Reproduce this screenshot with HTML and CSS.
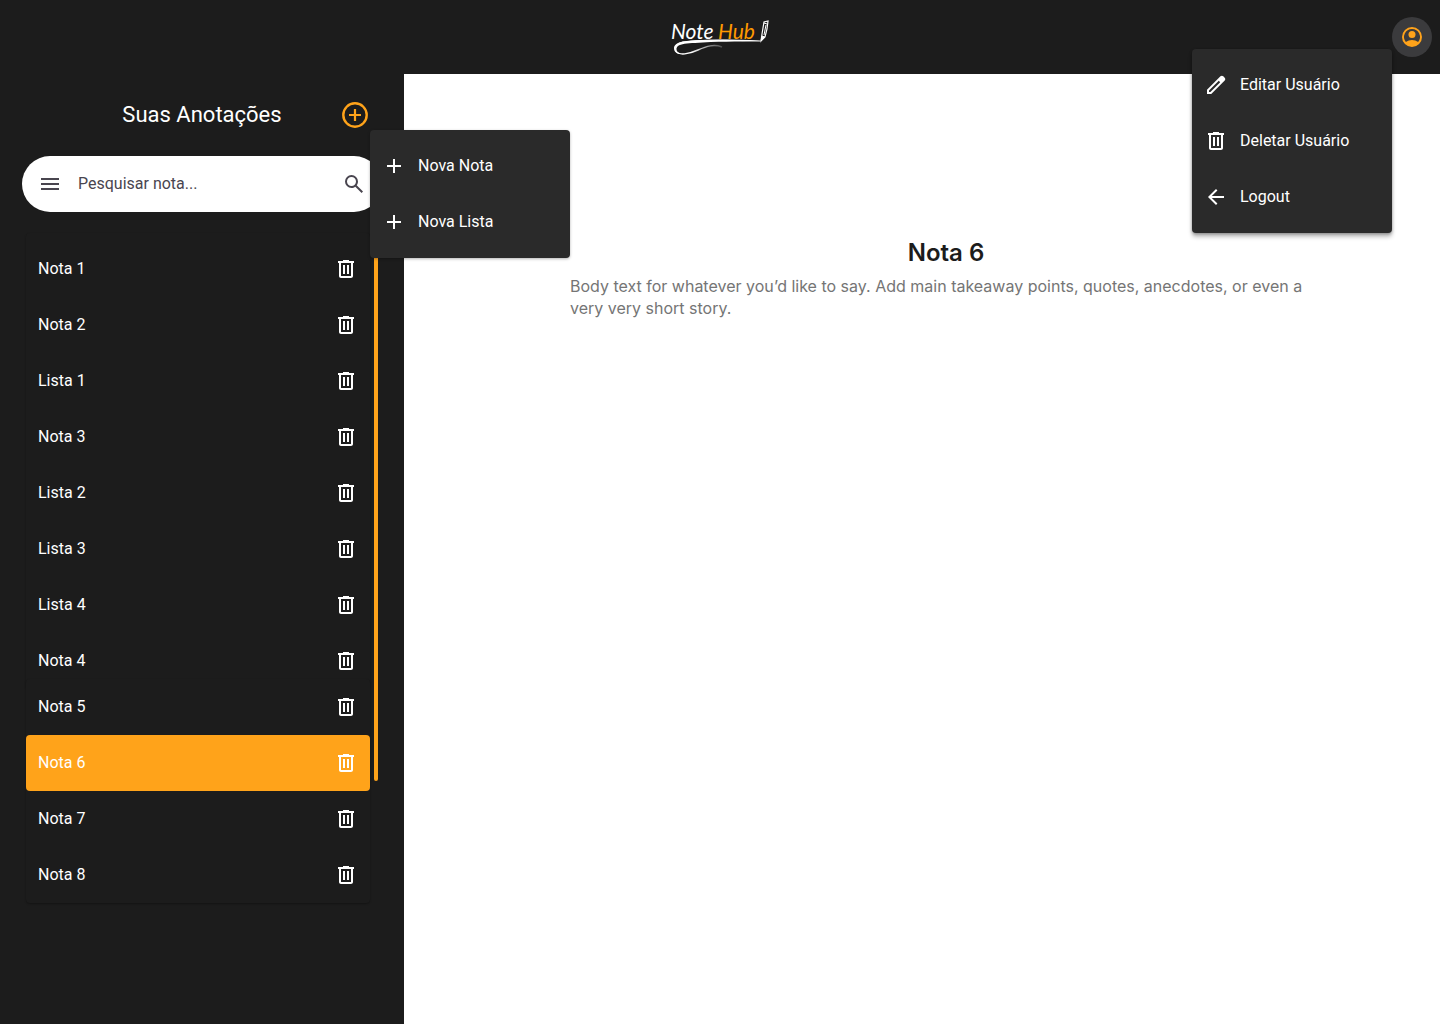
FILE: index.html
```html
<!DOCTYPE html>
<html lang="pt-BR">
<head>
<meta charset="utf-8">
<meta name="viewport" content="width=device-width, initial-scale=1">
<title>NoteHub</title>
<link rel="stylesheet" href="styles.css">
</head>
<body>
<svg class="sprite" aria-hidden="true">
  <symbol id="trash" viewBox="0 0 24 24"><path d="M7 21C5.9 21 5 20.1 5 19V6H4V4H9V3H15V4H20V6H19V19C19 20.1 18.1 21 17 21H7ZM17 6H7V19H17V6ZM9 17H11V8H9V17ZM13 17H15V8H13V17Z"/></symbol>
  <symbol id="plus" viewBox="0 0 24 24"><path d="M19 13H13V19H11V13H5V11H11V5H13V11H19V13Z"/></symbol>
</svg>

<header class="topbar">
  <a class="logo" href="#" aria-label="NoteHub">
    <svg width="98" height="38" viewBox="0 0 98 38">
      <defs>
        <linearGradient id="swoosh" gradientUnits="userSpaceOnUse" x1="20" y1="0" x2="51" y2="0">
          <stop offset="0" stop-color="#fff"/><stop offset="1" stop-color="#fff" stop-opacity="0.2"/>
        </linearGradient>
      </defs>
      <text class="logo-text" x="0" y="20">Note<tspan class="logo-accent" x="47">Hub</tspan></text>
      <path d="M89 22C62 21 28 21 12 23C6 24 3 28 5 32" fill="none" stroke="#fff" stroke-width="1.200"/>
      <path d="M89 22C62 21 40 20 18 22C9 22 3 25 3 29C3 33 6 35 10 35C5 33 4 30 7 27C10 25 16 24 24 24C45 22 65 23 89 22Z" fill="#fff"/>
      <path d="M5 32C8 37 18 35 27 31C36 27 43 25 51 28" fill="none" stroke="url(#swoosh)" stroke-width="1.400"/>
      <path d="M90 22L91 15L93 3L97 2L96 10L94 18Z" fill="#1c1c1c" stroke="#fff" stroke-width="1.200"/>
      <path d="M93 4L96 5M95 6L93 16M90 22L91 17L94 18Z" fill="#fff" stroke="#fff"/>
    </svg>
  </a>
  <div class="account">
    <button class="avatar" aria-label="Conta" aria-expanded="true">
      <svg class="icon" viewBox="0 0 24 24"><path fill-rule="evenodd" d="M12 2A10 10 0 1 0 12 22A10 10 0 1 0 12 2ZM12 4A8 8 0 0 1 18.1 17.1C16.4 15.8 14.3 15 12 15S7.600 15.800 5.900 17.100A8 8 0 0 1 12 4Z"/><circle cx="12" cy="9.500" r="3.500"/></svg>
    </button>
    <div class="menu account-menu">
      <button class="menu-item"><svg class="icon" viewBox="0 0 24 24"><path fill-rule="evenodd" d="M5 19H6.400L16.200 9.200L14.800 7.800L5 17.600V19ZM3 21V16.750L16.450 3.325C16.830 2.940 17.300 2.750 17.860 2.750C18.425 2.750 18.900 2.940 19.275 3.325L20.675 4.725C21.060 5.100 21.260 5.567 21.275 6.100C21.290 6.650 21.110 7.117 20.725 7.500L7.250 21Z"/></svg>Editar Usuário</button>
      <button class="menu-item"><svg class="icon"><use href="#trash"/></svg>Deletar Usuário</button>
      <button class="menu-item"><svg class="icon" viewBox="0 0 24 24"><path d="M7.825 13L13.425 18.600L12 20L4 12L12 4L13.425 5.400L7.825 11H20V13H7.825Z"/></svg>Logout</button>
    </div>
  </div>
</header>

<div class="workspace">
  <aside class="sidebar">
    <div class="sidebar-head">
      <h2 class="sidebar-title">Suas Anotações</h2>
      <button class="add" aria-label="Adicionar" aria-expanded="true">
        <svg class="add-icon" viewBox="0 0 30 30" fill="none" stroke="currentColor"><circle cx="15" cy="15" r="11.700" stroke-width="2.400"/><path d="M15 9V21M9 15H21" stroke-width="2.200"/></svg>
      </button>
    </div>
    <form class="search">
      <svg class="icon" viewBox="0 0 24 24" aria-hidden="true"><path d="M3 6H21V8H3ZM3 11H21V13H3ZM3 16H21V18H3Z"/></svg>
      <input class="search-input" type="text" placeholder="Pesquisar nota..." aria-label="Pesquisar nota">
      <button class="search-button" aria-label="Pesquisar"><svg class="icon" viewBox="0 0 24 24"><path d="M19.600 21L13.300 14.700C12.300 15.500 11 16 9.500 16A6.500 6.500 0 1 1 16 9.500C16 11 15.500 12.300 14.700 13.300L21 19.600L19.600 21ZM9.500 14A4.500 4.500 0 1 0 9.500 5A4.500 4.500 0 0 0 9.500 14Z"/></svg></button>
    </form>
    <div class="notes">
      <div class="note-groups">
        <ul class="note-list note-list-first">
          <li class="note"><a class="note-link" href="#">Nota 1</a><button class="delete" aria-label="Deletar Nota 1"><svg class="icon"><use href="#trash"/></svg></button></li>
          <li class="note"><a class="note-link" href="#">Nota 2</a><button class="delete" aria-label="Deletar Nota 2"><svg class="icon"><use href="#trash"/></svg></button></li>
          <li class="note"><a class="note-link" href="#">Lista 1</a><button class="delete" aria-label="Deletar Lista 1"><svg class="icon"><use href="#trash"/></svg></button></li>
          <li class="note"><a class="note-link" href="#">Nota 3</a><button class="delete" aria-label="Deletar Nota 3"><svg class="icon"><use href="#trash"/></svg></button></li>
          <li class="note"><a class="note-link" href="#">Lista 2</a><button class="delete" aria-label="Deletar Lista 2"><svg class="icon"><use href="#trash"/></svg></button></li>
          <li class="note"><a class="note-link" href="#">Lista 3</a><button class="delete" aria-label="Deletar Lista 3"><svg class="icon"><use href="#trash"/></svg></button></li>
          <li class="note"><a class="note-link" href="#">Lista 4</a><button class="delete" aria-label="Deletar Lista 4"><svg class="icon"><use href="#trash"/></svg></button></li>
          <li class="note"><a class="note-link" href="#">Nota 4</a><button class="delete" aria-label="Deletar Nota 4"><svg class="icon"><use href="#trash"/></svg></button></li>
        </ul>
        <ul class="note-list note-list-second">
          <li class="note"><a class="note-link" href="#">Nota 5</a><button class="delete" aria-label="Deletar Nota 5"><svg class="icon"><use href="#trash"/></svg></button></li>
          <li class="note note-active"><a class="note-link" href="#" aria-current="page">Nota 6</a><button class="delete" aria-label="Deletar Nota 6"><svg class="icon"><use href="#trash"/></svg></button></li>
          <li class="note"><a class="note-link" href="#">Nota 7</a><button class="delete" aria-label="Deletar Nota 7"><svg class="icon"><use href="#trash"/></svg></button></li>
          <li class="note"><a class="note-link" href="#">Nota 8</a><button class="delete" aria-label="Deletar Nota 8"><svg class="icon"><use href="#trash"/></svg></button></li>
        </ul>
      </div>
      <div class="scroll-thumb"></div>
    </div>
    <div class="menu add-menu">
      <button class="menu-item"><svg class="icon"><use href="#plus"/></svg>Nova Nota</button>
      <button class="menu-item"><svg class="icon"><use href="#plus"/></svg>Nova Lista</button>
    </div>
  </aside>

  <main class="content">
    <h1 class="note-title">Nota 6</h1>
    <p class="note-body">Body text for whatever you’d like to say. Add main takeaway points, quotes, anecdotes, or even a very very short story.</p>
  </main>
</div>
</body>
</html>
```
FILE: styles.css
```css
:root {
  --dark: #1c1c1c;
  --menu: #2a2a2a;
  --orange: #ffa31a;
}

* {
  box-sizing: border-box;
}

body {
  margin: 0;
  min-height: 100vh;
  display: flex;
  flex-direction: column;
  background: #fff;
  font: 16px/24px Roboto, "Liberation Sans", sans-serif;
}

h1, h2, p, ul {
  margin: 0;
  padding: 0;
}

button {
  padding: 0;
  border: 0;
  background: none;
  color: inherit;
  font: inherit;
  cursor: pointer;
}

.sprite {
  display: none;
}

.icon {
  display: block;
  flex: none;
  width: 24px;
  height: 24px;
  fill: currentColor;
}

/* Top bar */
.topbar {
  display: grid;
  grid-template-columns: 1fr auto 1fr;
  align-items: center;
  height: 74px;
  padding: 0 8px;
  background: var(--dark);
}

.logo {
  grid-column: 2;
  height: 36px;
}

.logo svg {
  display: block;
  overflow: visible;
}

.logo-text {
  fill: #fff;
  font: italic 21px Lato, sans-serif;
}

.logo-accent {
  fill: #ff9900;
}

.account {
  position: relative;
  justify-self: end;
}

.avatar {
  display: grid;
  place-items: center;
  width: 40px;
  height: 40px;
  border-radius: 50%;
  background: #3b3b3d;
  color: var(--orange);
}

/* Pop-up menus */
.menu {
  position: absolute;
  z-index: 2;
  width: 200px;
  padding: 8px 0;
  border-radius: 4px;
  background: var(--menu);
  box-shadow: 0 1px 3px rgba(0, 0, 0, 0.3);
  color: #fff;
}

.account-menu {
  top: 32px;
  right: 40px;
  box-shadow: 0 4px 4px rgba(0, 0, 0, 0.25), 0 1px 3px rgba(0, 0, 0, 0.3);
}

.add-menu {
  top: 56px;
  left: 370px;
}

.menu-item {
  display: flex;
  align-items: center;
  gap: 12px;
  width: 100%;
  height: 56px;
  padding: 0 12px;
}

/* Sidebar */
.workspace {
  display: flex;
  flex: 1;
}

.sidebar {
  position: relative;
  flex: none;
  width: 404px;
  padding: 26px 22px;
  background: var(--dark);
  color: #fff;
}

.sidebar-head {
  display: grid;
  grid-template-columns: 1fr auto 1fr;
  align-items: center;
  padding: 0 12px;
}

.sidebar-title {
  grid-column: 2;
  font-size: 22px;
  font-weight: 400;
  line-height: 28px;
}

.add {
  justify-self: end;
  color: var(--orange);
}

.add-icon {
  display: block;
  width: 30px;
  height: 30px;
}

.search {
  display: flex;
  align-items: center;
  gap: 16px;
  height: 56px;
  margin-top: 26px;
  padding: 0 16px;
  border-radius: 28px;
  background: #fff;
  color: #49454f;
}

.search-input {
  flex: 1;
  min-width: 0;
  padding: 0;
  border: 0;
  outline: 0;
  background: none;
  color: inherit;
  font: inherit;
}

.search-input::placeholder {
  color: inherit;
  opacity: 1;
}

/* Notes list */
.notes {
  display: flex;
  gap: 4px;
  margin-top: 21px;
  padding: 0 4px;
}

.note-groups {
  flex: 1;
}

.note-list {
  border-radius: 4px;
  background: var(--dark);
  box-shadow: 0 1px 2px rgba(0, 0, 0, 0.3);
  list-style: none;
}

.note-list-first {
  padding-top: 8px;
}

.note-list-second {
  position: relative;
  margin-top: -10px;
}

.note {
  display: flex;
  align-items: center;
  height: 56px;
  padding: 0 12px;
  border-radius: 4px;
}

.note-active {
  background: var(--orange);
}

.note-link {
  flex: 1;
  color: #fff;
  text-decoration: none;
}

.scroll-thumb {
  width: 4px;
  height: 548px;
  border-radius: 2px;
  background: var(--orange);
}

/* Open note */
.content {
  flex: 1;
  padding: 164px 118px 40px 166px;
  font-family: Inter, "Liberation Sans", sans-serif;
}

.note-title {
  color: #1c1c1c;
  font-size: 24px;
  font-weight: 600;
  line-height: 29px;
  text-align: center;
}

.note-body {
  margin-top: 8px;
  color: #757575;
  line-height: 22px;
}
```
